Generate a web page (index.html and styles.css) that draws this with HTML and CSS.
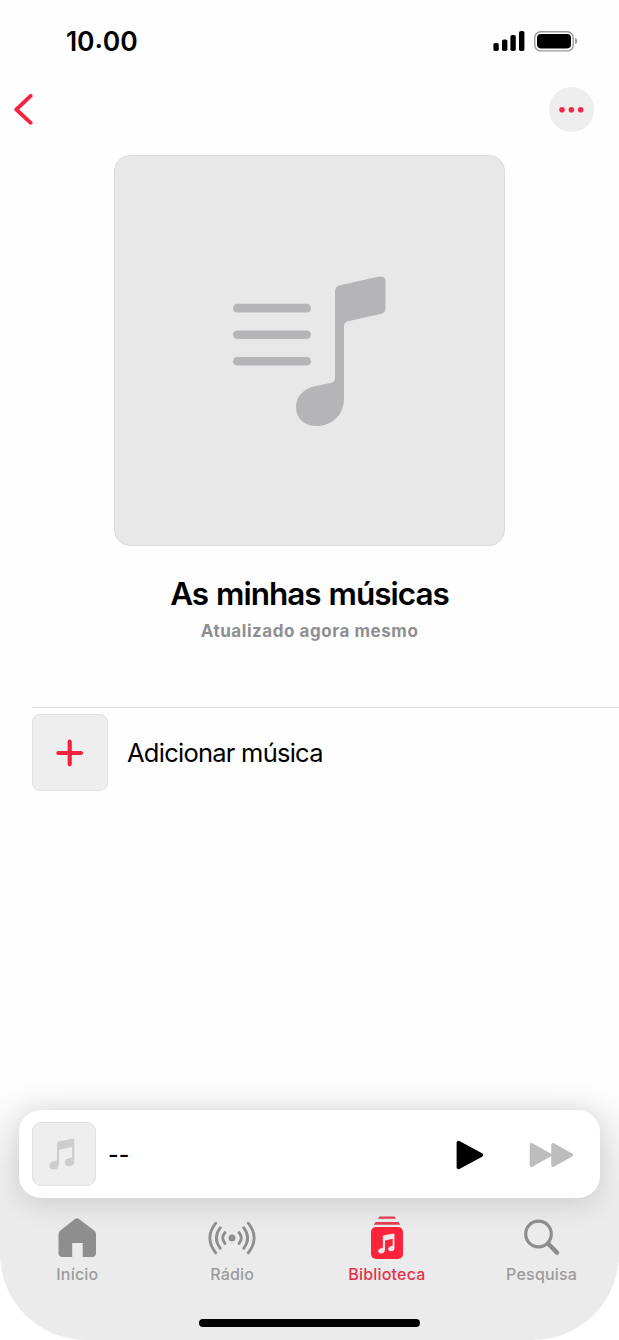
FILE: index.html
```html
<!DOCTYPE html>
<html lang="pt">
<head>
<meta charset="utf-8">
<title>As minhas músicas</title>
<link rel="stylesheet" href="styles.css">
</head>
<body>
<div class="phone">
  <header class="status">
    <div class="time">10<span class="time-dot">.</span>00</div>
    <div class="indicators">
      <svg class="signal" width="32" height="20" viewBox="0 0 32 20"><rect x=".4" y="12" width="5.400" height="8" rx="1.8"/><rect x="9" y="8.500" width="5.400" height="11.500" rx="1.8"/><rect x="17.400" y="4" width="5.400" height="16" rx="1.8"/><rect x="26" y="0" width="5.400" height="20" rx="1.8"/></svg>
      <svg width="44" height="21" viewBox="0 0 44 21"><rect x=".75" y=".7" width="38.500" height="19.200" rx="6" fill="none" stroke="#999" stroke-width="1.4"/><rect x="3" y="2.900" width="34" height="14.500" rx="3.8"/><path d="M41 6.700Q43.300 7.400 43.300 10T41 13.200Z" fill="#999"/></svg>
    </div>
  </header>
  <nav class="toolbar">
    <svg width="20" height="32" viewBox="0 0 20 32"><path d="M16.700 1.900 2.300 15.500 16.700 28.800" fill="none" stroke="#f4233f" stroke-width="3.800" stroke-linecap="round" stroke-linejoin="round"/></svg>
    <div class="more"><svg width="26" height="6" viewBox="0 0 26 6" fill="#ee2b46"><circle cx="3" cy="2.800" r="2.800"/><circle cx="12.400" cy="2.800" r="2.800"/><circle cx="21.700" cy="2.800" r="2.800"/></svg></div>
  </nav>
  <main class="content">
    <div class="artwork">
      <svg width="156" height="152" viewBox="0 0 156 152" fill="#b5b5b7"><rect x="1" y="28.800" width="78" height="8.600" rx="4.300"/><rect x="1" y="55.500" width="78" height="8.600" rx="4.300"/><rect x="1" y="82" width="78" height="8.600" rx="4.300"/><path d="M103 16.500Q103 11.500 108 10.300L147 1.600Q153.500.5 153.500 6.500V33.500Q153.500 38 148.500 39L116 46.200Q112 47.200 112 51V123.500C112 140.500 99 151 85 151C72 151 64 143.500 64 132C64 120.500 73 113 84 111L98.500 108Q103 107 103 102.500Z"/></svg>
    </div>
    <h1 class="title">As minhas músicas</h1>
    <p class="subtitle">Atualizado agora mesmo</p>
    <div class="row">
      <div class="add"><svg width="28" height="28" viewBox="0 0 28 28"><path d="M13.700 2.700V25.300M2.400 14H25" stroke="#f4233f" stroke-width="4.200" stroke-linecap="round"/></svg></div>
      <span class="row-label">Adicionar música</span>
    </div>
  </main>
  <footer class="bottom">
    <section class="player">
      <div class="thumb"><svg width="26" height="32" viewBox="0 0 26 32" fill="#cdcdcf"><path d="M8 5.500Q8 3.800 9.600 3.400L23 .7Q25.300.2 25.300 2V23.500C25.300 26.500 23.500 28.200 20 28.200C17.500 28.200 15.700 26.700 15.700 24.500C15.700 22 17.500 20.800 20 20.300L22 19.800Q23.100 19.500 23.100 18.300V9L10 11.700V25.500C10 29.500 8 31.500 4.500 31.500C2 31.500.3 30 .3 27.800C.3 25.500 2 24.200 4.500 23.600L6.500 23.100Q8 22.700 8 21.500Z"/></svg></div>
      <span class="track">--</span>
      <svg class="play" width="28" height="32" viewBox="0 0 28 32"><path d="M2.500 3.700V28.300L25.200 16Z" stroke="#000" stroke-width="3.800" stroke-linejoin="round"/></svg>
      <svg class="forward" width="45" height="28" viewBox="0 0 45 28"><path d="M2.500 3.800V24.200L20.800 14ZM24 3.800V24.200L42.300 14Z" fill="#bdbdbd" stroke="#bdbdbd" stroke-width="3.600" stroke-linejoin="round"/></svg>
    </section>
    <nav class="tabs">
      <div class="tab"><svg class="tab-icon" viewBox="0 0 50 46"><path d="M22.700 3.200Q25 1.500 27.300 3.200L41.800 14.200Q44 15.800 44 18.500V37Q44 41 40 41H30.700V27H20.200V41H10.500Q6.500 41 6.500 37V18.500Q6.500 15.800 8.700 14.200Z"/></svg><span class="tab-label">Início</span></div>
      <div class="tab"><svg class="tab-icon" viewBox="0 0 50 46"><circle cx="25" cy="22" r="3.500"/><g fill="none" stroke="#8e8e8e" stroke-width="2.800" stroke-linecap="round"><path d="M18 16.500Q13.500 22 18 27.500M13.300 11.700Q5.500 22 13.300 32.300M8.700 7.200Q-3 22 8.700 36.800M32 16.500Q36.500 22 32 27.500M36.700 11.700Q44.500 22 36.700 32.300M41.300 7.200Q53 22 41.300 36.800"/></g></svg><span class="tab-label">Rádio</span></div>
      <div class="tab tab-active"><svg class="tab-icon" viewBox="0 0 50 46"><path d="M17.500.5H32.500L34 2.700H16ZM13.500 5.900H36.500L38.200 8.700H11.800Z" fill="#df3b51"/><rect x="9" y="11" width="32" height="32" rx="5"/><g transform="translate(16 17) scale(.65)" fill="#f3e6e8"><path d="M7.500 5.500Q7.500 3.800 9.600 3.400L23 .7Q25.300.2 25.300 2V23.500C25.300 26.500 23.500 28.200 20 28.200C17.500 28.200 15.700 26.700 15.700 24.500C15.700 22 17.500 20.800 20 20.300L21.500 19.800Q22.500 19.500 22.500 18.300V9L10.800 11.700V25.500C10.800 29.500 8 31.500 4.500 31.500C2 31.500.3 30 .3 27.800C.3 25.500 2 24.200 4.500 23.600L6.500 23.100Q7.500 22.700 7.500 21.500Z"/></g></svg><span class="tab-label">Biblioteca</span></div>
      <div class="tab"><svg class="tab-icon" viewBox="0 0 50 46"><circle cx="21.500" cy="18" r="12.800" fill="none" stroke="#8e8e8e" stroke-width="3.200"/><path d="M31.500 28 40 36.700" stroke="#8e8e8e" stroke-width="4.600" stroke-linecap="round"/></svg><span class="tab-label">Pesquisa</span></div>
    </nav>
    <div class="home-bar"></div>
  </footer>
</div>
</body>
</html>
```
FILE: styles.css
```css
* { box-sizing: border-box; }
body { margin: 0; background: #fff; font-family: Inter, "Liberation Sans", sans-serif; color: #000; }
svg { display: block; flex: none; }
.phone { width: 619px; height: 1340px; display: flex; flex-direction: column; overflow: hidden; border-radius: 0 0 86px 86px; background: #fefefe; }
.status { height: 82px; display: flex; justify-content: space-between; padding: 0 41px 0 66px; }
.time { padding-top: 25px; font-size: 26.5px; font-weight: 600; line-height: 32px; letter-spacing: -.1px; }
.time-dot { vertical-align: 3px; line-height: 0; }
.indicators { display: flex; gap: 9px; padding-top: 31px; }
.toolbar { height: 73px; display: flex; justify-content: space-between; align-items: flex-start; padding: 12px 25px 0 14px; }
.more { width: 45px; height: 45px; margin-top: -7px; border-radius: 50%; background: #eee; display: flex; align-items: center; justify-content: center; }
.content { flex: 1; display: flex; flex-direction: column; align-items: center; }
.artwork { width: 391px; height: 391px; flex: none; border: 1px solid #dcdcdc; border-radius: 16px; background: #e8e8e8; padding: 119px 0 0 117px; }
.title { margin: 28px 0 0; font-size: 31.5px; font-weight: 600; line-height: 40px; letter-spacing: -1px; word-spacing: 1px; white-space: nowrap; }
.subtitle { margin: 4px 0 0; font-size: 17px; font-weight: 700; line-height: 26px; letter-spacing: .55px; color: #8f8f91; white-space: nowrap; }
.row { align-self: stretch; margin: 63px 0 0 32px; padding-top: 6px; border-top: 1px solid #e1e1e1; display: flex; align-items: center; gap: 19px; }
.add { width: 76px; height: 77px; border: 1px solid #e2e2e2; border-radius: 8px; background: #eee; display: flex; align-items: center; justify-content: center; }
.row-label { font-size: 25.5px; line-height: 34px; letter-spacing: -.75px; white-space: nowrap; }
.bottom { height: 260px; flex: none; padding: 30px 19px 0; background: linear-gradient(#fefefe 0, #fafafa 30px, #ebebeb 125px); }
.player { height: 88px; border-radius: 22px; background: #fff; box-shadow: 0 2px 30px rgba(0,0,0,.17); display: flex; align-items: center; padding: 0 26px 0 13px; }
.thumb { width: 64px; height: 64px; border: 1px solid #e2e2e2; border-radius: 9px; background: #eee; display: flex; align-items: center; justify-content: center; padding-right: 4px; }
.track { margin-left: 12px; padding-top: 2px; font-size: 23px; font-weight: 500; line-height: 30px; }
.play { margin: 1px 0 0 auto; }
.forward { margin: 1px 0 0 45px; }
.tabs { display: grid; grid-template-columns: repeat(4, 1fr); height: 101px; padding-top: 18px; margin: 0 -19px; }
.tab { display: flex; flex-direction: column; align-items: center; color: #9b9b9b; fill: #8e8e8e; }
.tab-active { color: #e5304c; fill: #fa233b; }
.tab-icon { width: 50px; height: 46px; }
.tab-label { margin-top: 1px; font-size: 16px; font-weight: 500; line-height: 22px; letter-spacing: .2px; }
.home-bar { width: 221px; height: 8px; margin: 20px auto 0; border-radius: 4px; background: #000; }
```
